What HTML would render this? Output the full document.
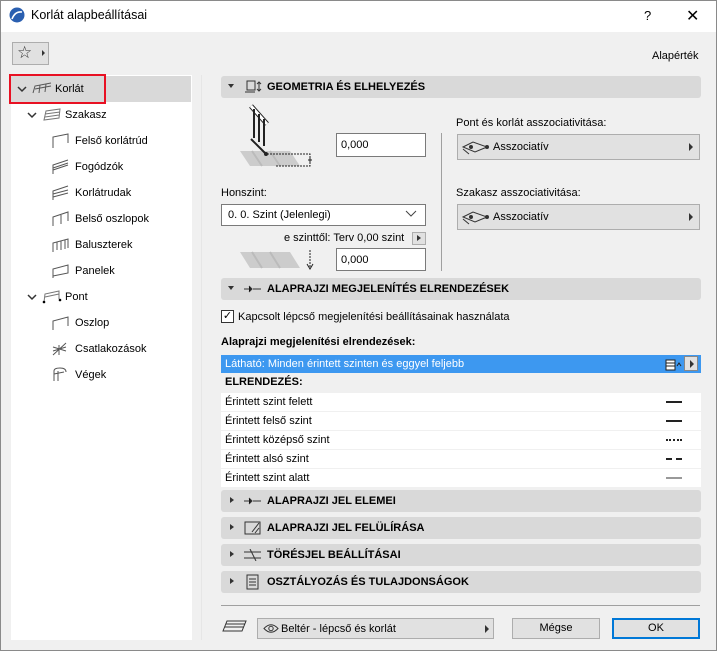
<!DOCTYPE html>
<html><head><meta charset="utf-8"><style>
*{margin:0;padding:0;box-sizing:border-box}
body{width:717px;height:651px;overflow:hidden;background:#f0f0f0;font-family:"Liberation Sans",sans-serif;font-size:11px;color:#000;position:relative}
.a{position:absolute;white-space:nowrap}
.hdr{position:absolute;left:221px;width:480px;height:22px;background:#d9d9d9;border-radius:3px;font-weight:bold;font-size:11px}
.hdr .t{position:absolute;left:46px;top:5px}
.tri{position:absolute;left:7px;top:8px;width:0;height:0;border-left:3.5px solid transparent;border-right:3.5px solid transparent;border-top:4px solid #333}
.tr{position:absolute;left:9px;top:7px;width:0;height:0;border-top:3.5px solid transparent;border-bottom:3.5px solid transparent;border-left:4px solid #333}
.inp{position:absolute;background:#fff;border:1px solid #7a7a7a;padding:5px 4px;font-size:11px}
.dd{position:absolute;background:#e1e1e1;border:1px solid #adadad}
.rt{position:absolute;right:6px;top:50%;margin-top:-4px;border-top:4px solid transparent;border-bottom:4px solid transparent;border-left:4px solid #333}
.row{position:absolute;left:221px;width:480px;height:18px;background:#fff}
.row span{position:absolute;left:4px;top:3px}
.row i{position:absolute;left:445px;top:8px;width:16px;border-top:2px solid #222}
.tree .a{font-size:11px}
.btn{position:absolute;background:#e1e1e1;border:1px solid #adadad;text-align:center;line-height:19px;font-size:11px}
</style></head><body>
<div class="a" style="left:0;top:0;width:717px;height:32px;background:#fff"></div>
<div class="a" style="left:0;top:0;width:717px;height:651px;border:1px solid #8a8a8a"></div>
<svg class="a" style="left:9px;top:7px" width="16" height="16"><circle cx="8" cy="8" r="7.5" fill="#2a5fb0"/><path d="M3 12 Q6 4 13 5" stroke="#fff" stroke-width="1.6" fill="none"/></svg>
<div class="a" style="left:31px;top:8px;font-size:12.5px">Korlát alapbeállításai</div>
<div class="a" style="left:644px;top:8px;font-size:13px">?</div>
<div class="a" style="left:686px;top:6px;font-size:16px">✕</div>

<div class="a" style="left:12px;top:42px;width:37px;height:23px;border:1px solid #adadad;background:#e1e1e1"></div>
<div class="a" style="left:17px;top:43px;font-size:17px;color:#333">☆</div>
<div class="a" style="left:42px;top:50px;border-top:3.5px solid transparent;border-bottom:3.5px solid transparent;border-left:3.5px solid #333"></div>
<div class="a" style="left:652px;top:50px">Alapérték</div>

<div class="a" style="left:11px;top:75px;width:181px;height:565px;background:#fff"></div>
<div class="a" style="left:11px;top:76px;width:180px;height:26px;background:#d9d9d9"></div>
<div class="a" style="left:9px;top:74px;width:97px;height:30px;border:2px solid #e81123"></div>
<div class="a" style="left:201px;top:75px;width:1px;height:565px;background:#e6e6e6"></div>
<svg class="a" style="left:0;top:0" width="60" height="310" stroke="#333" stroke-width="1.5" fill="none"><path d="M18 87 L22 91 L26 87 M28 113 L32 117 L36 113 M28 295 L32 299 L36 295"/></svg>
<div class="tree">
<svg class="a" style="left:32px;top:82px" width="20" height="12"><path d="M1 11 L3 4 L19 1 M3 7 L19 4 M8 3 L7 11 M14 2 L13 10" stroke="#555" fill="none"/></svg>
<div class="a" style="left:55px;top:83px">Korlát</div>
<svg class="a" style="left:43px;top:108px" width="18" height="13"><path d="M1 12 L3 3 L17 1 L16 10 Z M2 9 L16 7 M2 6 L17 4" stroke="#777" fill="none"/></svg>
<div class="a" style="left:65px;top:109px">Szakasz</div>
<div class="a" style="left:75px;top:135px">Felső korlátrúd</div>
<div class="a" style="left:75px;top:161px">Fogódzók</div>
<div class="a" style="left:75px;top:187px">Korlátrudak</div>
<div class="a" style="left:75px;top:213px">Belső oszlopok</div>
<div class="a" style="left:75px;top:239px">Baluszterek</div>
<div class="a" style="left:75px;top:265px">Panelek</div>
<svg class="a" style="left:42px;top:289px" width="20" height="15"><path d="M2 13 L3 5 L17 2 L17 10 M3 8 L17 5" stroke="#777" fill="none"/><circle cx="2" cy="13" r="1.3"/><circle cx="18" cy="11" r="1.3"/></svg>
<div class="a" style="left:65px;top:291px">Pont</div>
<div class="a" style="left:75px;top:317px">Oszlop</div>
<div class="a" style="left:75px;top:343px">Csatlakozások</div>
<div class="a" style="left:75px;top:369px">Végek</div>
<svg class="a" style="left:52px;top:133px" width="18" height="260" stroke="#555" fill="none">
<path d="M1 15 L1 4 L16 1 L16 10"/>
<path d="M1 41 L1 32 L16 27 M1 35 L16 30 M1 37 L16 32"/>
<path d="M1 67 L1 58 L16 53 M1 61 L16 57 M1 64 L16 60"/>
<path d="M1 93 L1 84 L16 79 L16 88 M9 82 L9 91"/>
<path d="M1 119 L1 110 L16 106 L16 115 M5 109 L5 117 M9 108 L9 117 M13 107 L13 116"/>
<path d="M1 145 L1 136 L16 132 L16 140 L1 143"/>
<path d="M1 197 L1 188 L16 184 L16 193"/>
<path d="M1 222 L14 210 M1 218 L14 214 M1 214 L14 218 M7 212 L7 222"/>
<path d="M2 248 L2 238 Q2 235 8 235 Q14 235 14 239 M6 238 L6 248 M2 241 L12 239"/>
</svg>
</div>

<div class="hdr" style="top:76px"><div class="tri"></div>
<svg class="a" style="left:24px;top:4px" width="18" height="14" stroke="#333" fill="none"><rect x="2" y="1" width="8" height="9"/><path d="M0 12 L10 12 M14 2 L14 11 M12 4 L14 2 L16 4 M12 9 L14 11 L16 9"/></svg>
<div class="t">GEOMETRIA ÉS ELHELYEZÉS</div></div>
<svg class="a" style="left:240px;top:104px" width="80" height="180" fill="none">
<path d="M0 47 L50 47 L60 62 L10 62 Z" fill="#ccc"/>
<path d="M12 47 L22 62 M30 47 L40 62" stroke="#bbb" stroke-width="2"/>
<path d="M11 2 L27 20" stroke="#222" stroke-width="5"/><path d="M11 2 L27 20" stroke="#fff" stroke-width="3"/>
<path d="M14 5 L14 34 M19 10 L19 38 M24 15 L24 42" stroke="#222" stroke-width="2"/>
<path d="M11 35 L25 49" stroke="#222" stroke-width="2"/><circle cx="26" cy="50" r="2" fill="#222"/>
<path d="M27 50 L70 50 L70 62 L36 62" stroke="#222" stroke-dasharray="2,1"/>
<path d="M68 56 L72 56 M70 53 L70 59" stroke="#222"/>
<path d="M0 148 L50 148 L60 164 L10 164 Z" fill="#ccc"/>
<path d="M12 148 L22 164 M30 148 L40 164" stroke="#bbb" stroke-width="2"/>
<path d="M70 146 L70 164" stroke="#222" stroke-dasharray="2,1"/><path d="M67 160 L70 165 L73 160" stroke="#222"/>
</svg>
<div class="inp" style="left:336px;top:133px;width:90px;height:24px">0,000</div>
<div class="inp" style="left:336px;top:248px;width:90px;height:23px">0,000</div>
<div class="a" style="left:221px;top:187px">Honszint:</div>
<div class="inp" style="left:221px;top:204px;width:205px;height:22px;padding:4px 6px">0. 0. Szint (Jelenlegi)</div>
<svg class="a" style="left:405px;top:210px" width="12" height="8" stroke="#444" fill="none"><path d="M1 1 L6 6 L11 1"/></svg>
<div class="a" style="left:284px;top:232px">e szinttől: Terv 0,00 szint</div>
<div class="dd" style="left:412px;top:232px;width:14px;height:13px"><div class="rt" style="right:4px;margin-top:-3.5px;border-width:3.5px 0 3.5px 4px"></div></div>
<div class="a" style="left:441px;top:133px;width:1px;height:138px;background:#a0a0a0"></div>
<div class="a" style="left:456px;top:117px">Pont és korlát asszociativitása:</div>
<div class="dd" style="left:457px;top:134px;width:243px;height:26px"><div class="rt"></div>
<svg class="a" style="left:3px;top:4px" width="30" height="16" stroke="#333" fill="none"><path d="M2 8 L12 3 L26 8 L14 13 Z M2 10 L8 15" /><circle cx="10" cy="8" r="1.5" fill="#333"/><circle cx="26" cy="8" r="1.5" fill="#333"/></svg>
<div class="a" style="left:35px;top:6px">Asszociatív</div></div>
<div class="a" style="left:456px;top:187px">Szakasz asszociativitása:</div>
<div class="dd" style="left:457px;top:204px;width:243px;height:26px"><div class="rt"></div>
<svg class="a" style="left:3px;top:4px" width="30" height="16" stroke="#333" fill="none"><path d="M2 8 L12 3 L26 8 L14 13 Z M2 10 L8 15" /><circle cx="10" cy="8" r="1.5" fill="#333"/><circle cx="26" cy="8" r="1.5" fill="#333"/></svg>
<div class="a" style="left:35px;top:6px">Asszociatív</div></div>

<div class="hdr" style="top:278px"><div class="tri"></div>
<svg class="a" style="left:23px;top:6px" width="18" height="10" stroke="#333"><path d="M0 5 L7 5 M5 2 L8 5 L5 8 M9 5 L17 5" stroke-dasharray="none"/></svg>
<div class="t">ALAPRAJZI MEGJELENÍTÉS ELRENDEZÉSEK</div></div>
<div class="a" style="left:221px;top:310px;width:13px;height:13px;border:1px solid #333;background:#fff;font-size:11px;line-height:11px;text-align:center">✓</div>
<div class="a" style="left:238px;top:311px">Kapcsolt lépcső megjelenítési beállításainak használata</div>
<div class="a" style="left:221px;top:336px;font-weight:bold">Alaprajzi megjelenítési elrendezések:</div>
<div class="a" style="left:221px;top:355px;width:480px;height:18px;background:#3d98f0;color:#fff"><span class="a" style="left:4px;top:3px">Látható: Minden érintett szinten és eggyel feljebb</span>
<svg class="a" style="left:444px;top:2px" width="18" height="14" stroke="#222" fill="#fff"><rect x="1" y="3" width="9" height="10"/><path d="M1 6 L10 6 M1 9 L10 9 M12 9 L14 6 L16 9" fill="none"/></svg>
<div class="a" style="left:463px;top:1px;width:14px;height:15px;background:#e1e1e1;border:1px solid #888"><div class="rt" style="right:3px;margin-top:-4px"></div></div></div>
<div class="a" style="left:225px;top:376px;font-weight:bold">ELRENDEZÉS:</div>
<div class="row" style="top:393px"><span>Érintett szint felett</span><i></i></div>
<div class="row" style="top:412px"><span>Érintett felső szint</span><i></i></div>
<div class="row" style="top:431px"><span>Érintett középső szint</span><i style="border-top:2px dotted #222"></i></div>
<div class="row" style="top:450px"><span>Érintett alsó szint</span><i style="border-top:2px dashed #222"></i></div>
<div class="row" style="top:469px"><span>Érintett szint alatt</span><i style="border-top:2px solid #999"></i></div>

<div class="hdr" style="top:490px"><div class="tr"></div><svg class="a" style="left:23px;top:6px" width="18" height="10" stroke="#333"><path d="M0 5 L7 5 M5 2 L8 5 L5 8 M9 5 L17 5"/></svg><div class="t">ALAPRAJZI JEL ELEMEI</div></div>
<div class="hdr" style="top:517px"><div class="tr"></div><svg class="a" style="left:23px;top:3px" width="18" height="16" stroke="#333" fill="none"><rect x="1" y="2" width="15" height="12"/><path d="M8 12 L15 3 M11 13 L15 8"/></svg><div class="t">ALAPRAJZI JEL FELÜLÍRÁSA</div></div>
<div class="hdr" style="top:544px"><div class="tr"></div><svg class="a" style="left:23px;top:5px" width="18" height="12" stroke="#333" fill="none"><path d="M0 3 L17 3 M0 9 L17 9 M6 0 L12 12"/></svg><div class="t">TÖRÉSJEL BEÁLLÍTÁSAI</div></div>
<div class="hdr" style="top:571px"><div class="tr"></div><svg class="a" style="left:25px;top:3px" width="14" height="16" stroke="#333" fill="none"><rect x="1" y="1" width="11" height="14"/><path d="M3 5 L10 5 M3 8 L10 8 M3 11 L10 11"/></svg><div class="t">OSZTÁLYOZÁS ÉS TULAJDONSÁGOK</div></div>

<div class="a" style="left:221px;top:605px;width:479px;height:1px;background:#a0a0a0"></div>
<svg class="a" style="left:222px;top:617px" width="26" height="16" stroke="#333" fill="none"><path d="M1 14 L5 4 L24 4 L20 14 Z M3 10 L22 10 M4 7 L23 7"/></svg>
<div class="dd" style="left:257px;top:618px;width:237px;height:21px"><div class="rt" style="right:4px"></div>
<svg class="a" style="left:5px;top:4px" width="16" height="11" stroke="#333" fill="none"><path d="M1 5.5 Q8 -2 15 5.5 Q8 13 1 5.5 Z"/><circle cx="8" cy="5.5" r="2.2"/></svg><div class="a" style="left:23px;top:4px">Beltér - lépcső és korlát</div></div>
<div class="btn" style="left:512px;top:618px;width:88px;height:21px">Mégse</div>
<div class="btn" style="left:612px;top:618px;width:88px;height:21px;border:2px solid #0078d7;line-height:17px">OK</div>
</body></html>
